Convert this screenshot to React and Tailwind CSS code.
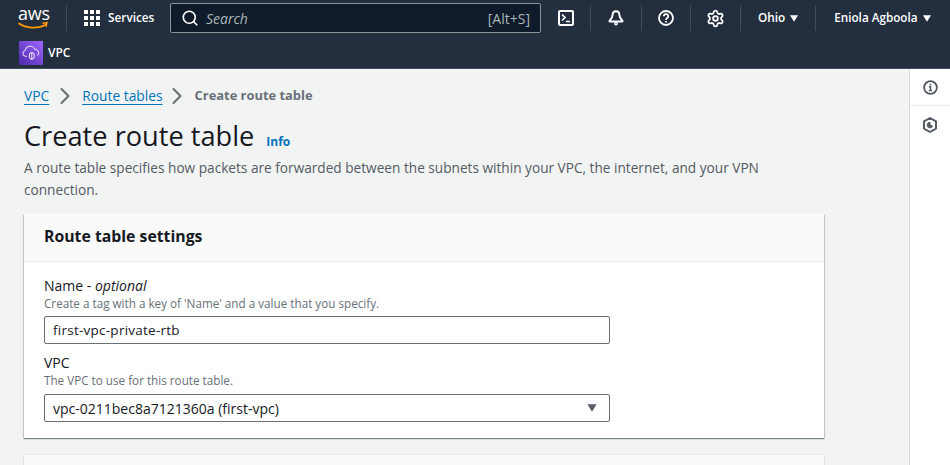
import React from 'react';
import { Search, ChevronRight, Settings } from 'lucide-react';

const font = "font-['Open_Sans',sans-serif]";

function AwsLogo() {
  return (
    <div className="relative w-[32px] h-[28px]">
      <span className="block text-white text-[18px] leading-[18px] font-medium tracking-[-0.2px] font-['Open_Sans',sans-serif]">aws</span>
      <svg viewBox="0 0 32 10" className="absolute left-0 top-[17px] w-[32px] h-[10px]">
        <path d="M1 2.5C8 7.5 20 8 28 3.5" fill="none" stroke="#ff9900" strokeWidth="1.7" strokeLinecap="round" />
        <path d="M25 2.2l4-.6-.8 3.8" fill="none" stroke="#ff9900" strokeWidth="1.4" strokeLinecap="round" />
      </svg>
    </div>
  );
}

function GridIcon() {
  return (
    <div className="grid grid-cols-3 gap-[2px] w-[16px] h-[16px]">
      {Array.from({ length: 9 }).map((_, i) => (
        <div key={i} className="bg-white w-[4px] h-[4px]" />
      ))}
    </div>
  );
}

function Divider() {
  return <div className="w-px h-[26px] bg-[#414d5c]" />;
}

function Caret({ className = 'fill-white w-[8px] h-[7px]' }) {
  return (
    <svg viewBox="0 0 8 7" className={className}>
      <path d="M0 .2h8L4 6.8z" />
    </svg>
  );
}

function TerminalIcon() {
  return (
    <svg viewBox="0 0 16 16" className="w-[16px] h-[16px]" fill="none" stroke="white" strokeWidth="2">
      <rect x="1" y="1" width="14" height="14" rx="1" />
      <path d="M4 4.5l3 3-3 3M8 11.5h4" strokeWidth="1.7" />
    </svg>
  );
}

function BellIcon() {
  return (
    <svg viewBox="0 0 16 16" className="w-[16px] h-[16px]" fill="none" stroke="white" strokeWidth="1.9" strokeLinejoin="round">
      <path d="M8 1.2c-2.2 0-3.4 1.7-3.4 3.8 0 2.6-1 3.8-3 5.7v.8h12.8v-.8c-2-1.9-3-3.1-3-5.7 0-2.1-1.2-3.8-3.4-3.8z" />
      <circle cx="8" cy="13.6" r="1.2" strokeWidth="1.4" />
    </svg>
  );
}

function HelpIcon() {
  return (
    <svg viewBox="0 0 16 16" className="w-[16px] h-[16px]" fill="none" stroke="white" strokeWidth="1.8">
      <circle cx="8" cy="8" r="7" />
      <path d="M5.8 6.2a2.2 2.2 0 1 1 3.4 1.9c-.8.5-1.2.9-1.2 1.8" />
      <path d="M8 11v1.6" />
    </svg>
  );
}

function VpcIcon() {
  return (
    <div className="w-[24px] h-[24px] bg-gradient-to-tr from-[#4d27a8] to-[#a166ff] flex items-center justify-center">
      <svg viewBox="0 0 24 24" className="w-[20px] h-[20px]" fill="none" stroke="white" strokeWidth="1.1">
        <path d="M7 16H5.5A3.5 3.5 0 0 1 5 9.1 6 6 0 0 1 16.5 7.5 4.5 4.5 0 0 1 20 15" />
        <rect x="10" y="11.5" width="6" height="8" rx="3" />
        <path d="M13 11.5v8" />
      </svg>
    </div>
  );
}

function InfoCircle() {
  return (
    <svg viewBox="0 0 16 16" className="w-[15px] h-[15px]" fill="none" stroke="#545b64" strokeWidth="2">
      <circle cx="8" cy="8" r="6.8" />
      <path d="M6.3 7.2H8v4M6.3 11.2h3.4" strokeWidth="1.6" />
      <path d="M8 4v1.7" strokeWidth="1.8" />
    </svg>
  );
}

function HexIcon() {
  return (
    <svg viewBox="0 0 16 16" className="w-[16px] h-[16px]" fill="none" stroke="#545b64" strokeWidth="2" strokeLinejoin="round">
      <path d="M8 1l6 3.4v7.2L8 15l-6-3.4V4.4z" />
      <path d="M8 5.3a2.8 2.8 0 1 0 2.6 3.8L8 8z" fill="#545b64" strokeWidth="1" />
    </svg>
  );
}

function Header() {
  return (
    <header className="bg-[#232f3e] h-[69px] shrink-0 border-b border-[#414d5c]">
      <div className="h-[36px] flex items-center pl-[18px] text-white">
        <AwsLogo />
        <div className="ml-[16px]"><Divider /></div>
        <div className="ml-[17px]"><GridIcon /></div>
        <span className="ml-[8px] w-[46px] text-[11.8px] font-semibold">Services</span>
        <div className="ml-[16px] w-[371px] h-[30px] bg-[#0f1b2a] border border-[#879596] rounded-[2px] flex items-center pl-[10px] pr-[10px]">
          <Search className="w-[18px] h-[18px] text-white" strokeWidth={2.2} />
          <span className="ml-[7px] text-[14px] italic text-[#aab7b8]">Search</span>
          <span className="ml-auto text-[14px] text-[#aab7b8]">[Alt+S]</span>
        </div>
        <div className="ml-[17px]"><TerminalIcon /></div>
        <div className="ml-[16px]"><Divider /></div>
        <div className="ml-[17px]"><BellIcon /></div>
        <div className="ml-[17px]"><Divider /></div>
        <div className="ml-[16px]"><HelpIcon /></div>
        <div className="ml-[16px]"><Divider /></div>
        <div className="ml-[15px]"><Settings className="w-[19px] h-[19px] text-white" strokeWidth={2.3} /></div>
        <div className="ml-[15px]"><Divider /></div>
        <span className="ml-[17px] text-[11.8px] font-semibold">Ohio</span>
        <div className="ml-[5px]"><Caret /></div>
        <div className="ml-[17px]"><Divider /></div>
        <span className="ml-[18px] text-[11.7px] font-semibold">Eniola Agboola</span>
        <div className="ml-[6px]"><Caret /></div>
      </div>
      <div className="flex items-center pl-[19px] h-[32px] pt-[1px] text-white">
        <VpcIcon />
        <span className="ml-[5px] text-[12px] font-semibold">VPC</span>
      </div>
    </header>
  );
}

function Breadcrumbs() {
  return (
    <nav className="flex items-center text-[13.8px] h-[20px]">
      <a className="text-[#0073bb] underline underline-offset-[3px]">VPC</a>
      <ChevronRight className="w-[28px] h-[28px] ml-[2px] mr-[3px] text-[#687078]" strokeWidth={1.8} />
      <a className="text-[#0073bb] underline underline-offset-[3px]">Route tables</a>
      <ChevronRight className="w-[28px] h-[28px] text-[#687078]" strokeWidth={1.8} />
      <span className="ml-[4px] text-[12.9px] font-bold text-[#687078]">Create route table</span>
    </nav>
  );
}

function Field({ label, hint, children }) {
  return (
    <div>
      <div className="text-[14px] leading-[19px] text-[#16191f]">{label}</div>
      <div className="text-[11.7px] leading-[16px] text-[#687078]">{hint}</div>
      {children}
    </div>
  );
}

export default function App() {
  return (
    <div className={`w-[950px] h-[465px] overflow-hidden flex flex-col bg-[#f2f3f3] ${font}`}>
      <Header />
      <div className="flex-1 flex min-h-0">
        <main className="flex-1 min-w-0 pl-[24px] pt-[17px]">
          <Breadcrumbs />
          <div className="mt-[12px] flex items-baseline">
            <h1 className="text-[27.2px] leading-[36px] text-[#16191f]">Create route table</h1>
            <a className="ml-[12px] text-[12px] font-bold text-[#0073bb]">Info</a>
          </div>
          <p className="mt-[3px] w-[780px] text-[13.65px] leading-[22px] text-[#545b64]">
            A route table specifies how packets are forwarded between the subnets within your VPC, the internet, and your VPN connection.
          </p>
          <section className="mt-[13px] w-[800px] bg-white shadow-[0_1px_1px_0_rgba(0,28,36,0.3),1px_1px_1px_0_rgba(0,28,36,0.15),-1px_1px_1px_0_rgba(0,28,36,0.15)]">
            <div className="h-[48px] bg-[#fafafa] border-b border-[#eaeded] px-[20px] pb-[2px] flex items-center">
              <h2 className="text-[15.8px] font-bold text-[#16191f]">Route table settings</h2>
            </div>
            <div className="px-[20px] pt-[14px] pb-[16px]">
              <Field
                label={<>Name - <em>optional</em></>}
                hint="Create a tag with a key of 'Name' and a value that you specify."
              >
                <div className="mt-[5px] w-[566px] h-[28px] bg-white border border-[#687078] rounded-[2px] flex items-center pl-[8px] text-[13.5px] tracking-[0.25px] text-[#16191f]">
                  first-vpc-private-rtb
                </div>
              </Field>
              <div className="mt-[9px]">
                <Field label="VPC" hint="The VPC to use for this route table.">
                  <div className="mt-[6px] w-[566px] h-[28px] bg-white border border-[#687078] rounded-[2px] flex items-center justify-between pl-[8px] pr-[12px] text-[14px] text-[#16191f]">
                    <span>vpc-0211bec8a7121360a (first-vpc)</span>
                    <Caret className="fill-[#545b64] w-[10px] h-[8px]" />
                  </div>
                </Field>
              </div>
            </div>
          </section>
          <section className="mt-[17px] w-[800px] h-[40px] bg-[#fafafa] shadow-[0_0_1px_0_rgba(0,28,36,0.3)]" />
        </main>
        <aside className="w-[41px] shrink-0 bg-white border-l border-[#d5dbdb]">
          <div className="h-[37px] border-b border-[#eaeded] flex items-center justify-center">
            <InfoCircle />
          </div>
          <div className="h-[37px] flex items-center justify-center">
            <HexIcon />
          </div>
        </aside>
      </div>
    </div>
  );
}
